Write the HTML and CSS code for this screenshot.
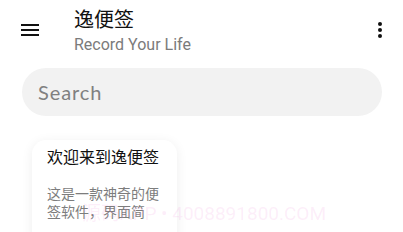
FILE: index.html
```html
<!DOCTYPE html>
<html lang="zh">
<head>
<meta charset="utf-8">
<link rel="stylesheet" href="styles.css">
</head>
<body>
<div class="app">
  <header class="topbar">
    <button class="icon-btn menu" aria-label="menu">
      <svg width="18" height="14" viewBox="0 0 18 14"><rect x="0" y="1" width="18" height="2" fill="#111"/><rect x="0" y="6" width="18" height="2" fill="#111"/><rect x="0" y="11" width="18" height="2" fill="#111"/></svg>
    </button>
    <div class="titles">
      <div class="title">逸便签</div>
      <div class="subtitle">Record Your Life</div>
    </div>
    <button class="icon-btn more" aria-label="more">
      <svg width="4" height="16" viewBox="0 0 4 16"><circle cx="2" cy="2" r="2" fill="#111"/><circle cx="2" cy="8" r="2" fill="#111"/><circle cx="2" cy="14" r="2" fill="#111"/></svg>
    </button>
  </header>
  <div class="search">Search</div>
  <div class="notes">
    <div class="card">
      <div class="card-title">欢迎来到逸便签</div>
      <div class="card-body">这是一款神奇的便签软件，界面简</div>
    </div>
  </div>
  <div class="watermark">源码APP • 4008891800.COM</div>
</div>
</body>
</html>
```
FILE: styles.css
```css
html, body { margin: 0; padding: 0; background: #fff; }
body { width: 403px; height: 232px; overflow: hidden; font-family: "Roboto", "Noto Sans CJK SC", sans-serif; }
.app { position: relative; height: 232px; overflow: hidden; }
.topbar { display: flex; align-items: flex-start; height: 60px; }
.icon-btn { background: none; border: 0; padding: 0; display: flex; align-items: center; justify-content: center; }
.menu { width: 18px; height: 14px; margin: 23px 0 0 21px; }
.titles { margin: 5px 0 0 35px; flex: 1; }
.title { font-size: 20px; line-height: 28px; color: #111; font-family: "Noto Sans CJK SC", sans-serif; }
.subtitle { font-size: 16px; line-height: 20px; color: #7b7b7b; margin-top: 2px; }
.more { width: 4px; height: 16px; margin: 22px 21px 0 0; }
.search { margin: 8px 21px 0 22px; height: 48px; border-radius: 24px; background: #f2f2f2; display: flex; align-items: center; padding-left: 16px; font-family: "Lato", sans-serif; font-size: 20px; color: #808080; letter-spacing: 0.9px; }
.notes { padding: 24px 0 0 32px; }
.card { width: 145px; height: 110px; box-sizing: border-box; background: #fff; border-radius: 14px; box-shadow: 0 2px 12px rgba(0,0,0,0.07); padding: 1px 15px 0 15px; }
.card-title { font-family: "Noto Sans CJK SC", sans-serif; font-size: 16px; line-height: 26px; color: #111; margin-top: 2px; }
.card-body { font-family: "Noto Sans CJK SC", sans-serif; font-size: 14px; line-height: 18px; color: #7d7d7d; margin-top: 15px; width: 114px; }
.watermark { position: absolute; left: 82px; top: 198px; font-family: "Roboto", "Noto Sans CJK SC", sans-serif; font-size: 19px; color: rgba(240, 150, 220, 0.16); white-space: nowrap; pointer-events: none; }
```
